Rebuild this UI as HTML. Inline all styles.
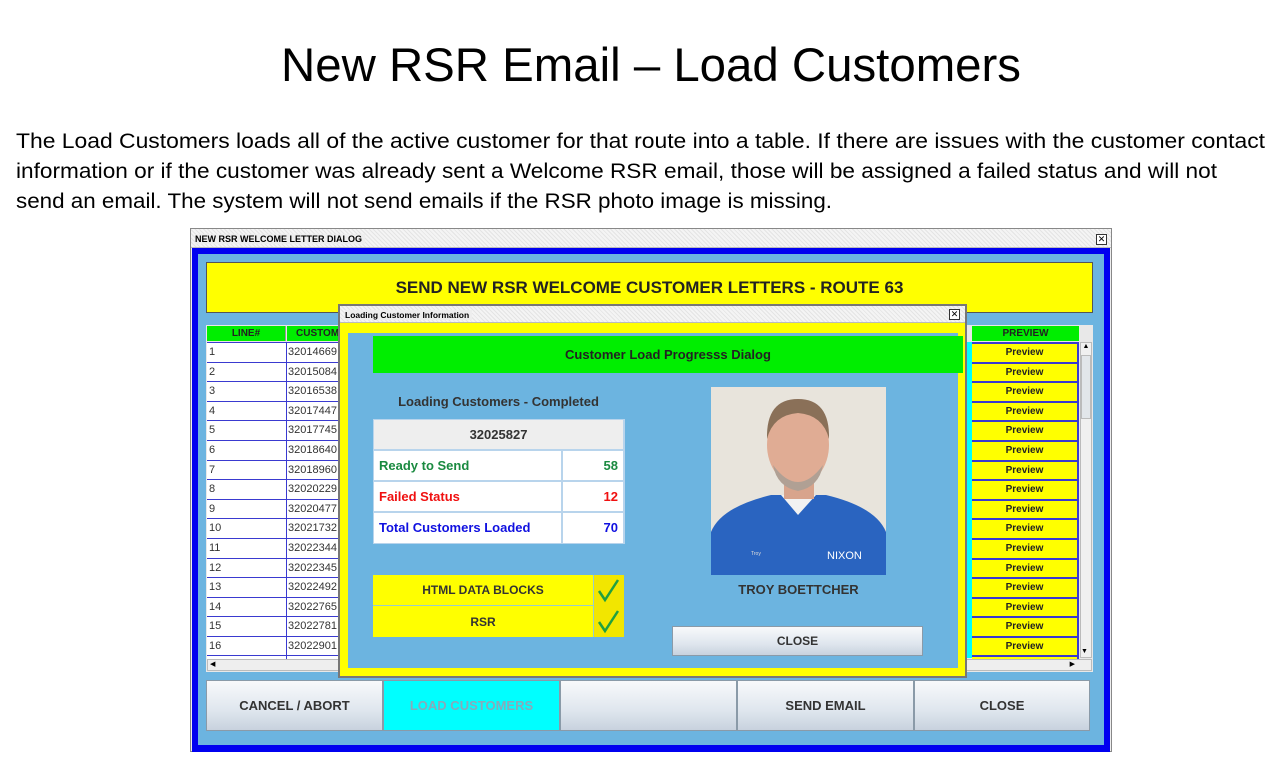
<!DOCTYPE html>
<html><head><meta charset="utf-8"><style>
*{margin:0;padding:0;box-sizing:border-box}
body{width:1272px;height:761px;background:#fff;position:relative;overflow:hidden;font-family:"Liberation Sans",Arial,sans-serif}
.a{position:absolute}
.b{font-weight:bold}
.c{display:flex;align-items:center;justify-content:center}
.cell{position:absolute;background:#fff;border-top:1px solid #3a3ad0;font-size:11px;color:#333;padding-left:2px;line-height:18px;height:20px}
.pv{position:absolute;left:972px;width:107px;height:20px;background:#ff0;border-top:2px solid #3a3ad0;border-right:2px solid #3a3ad0;font-size:10px;font-weight:bold;color:#222;text-align:center;line-height:17px}
.btn{position:absolute;top:680px;height:51px;border:1px solid #8a9aa8;background:linear-gradient(#f8f9fb,#dfe6ee 60%,#c8d2de);font-size:13px;font-weight:bold;color:#333;display:flex;align-items:center;justify-content:center}
.tb{position:absolute;background:repeating-linear-gradient(45deg,#e4e4e4 0 1px,#f4f4f4 1px 3px);border-bottom:1px solid #bbb}
.x{position:absolute;width:11px;height:11px;border:1px solid #333;font-size:9px;line-height:9px;text-align:center;background:#fff}
</style></head><body>
<svg class="a" style="left:0;top:0" width="1272" height="220">
<text x="281" y="81" font-size="47" font-family="Liberation Sans,sans-serif" textLength="740" lengthAdjust="spacingAndGlyphs" fill="#000">New RSR Email – Load Customers</text>
<g font-size="21" font-family="Liberation Sans,sans-serif" fill="#000">
<text x="16" y="148" textLength="1249" lengthAdjust="spacingAndGlyphs">The Load Customers loads all of the active customer for that route into a table.  If there are issues with the customer contact</text>
<text x="16" y="178" textLength="1201" lengthAdjust="spacingAndGlyphs">information or if the customer was already sent a Welcome RSR email, those will be assigned a failed status and will not</text>
<text x="16" y="208" textLength="816" lengthAdjust="spacingAndGlyphs">send an email.  The system will not send emails if the RSR photo image is missing.</text>
</g></svg>

<!-- main window -->
<div class="a" style="left:190px;top:228px;width:922px;height:524px;background:#eee;border:1px solid #888"></div>
<div class="tb" style="left:191px;top:229px;width:920px;height:19px"></div>
<div class="a b" style="left:195px;top:234px;font-size:9px;background:#eee;padding-right:3px">NEW RSR WELCOME LETTER DIALOG</div>
<div class="x" style="left:1096px;top:234px">✕</div>
<div class="a" style="left:192px;top:248px;width:918px;height:504px;background:#0000f0"></div>
<div class="a" style="left:198px;top:254px;width:906px;height:491px;background:#6cb4e0"></div>
<div class="a c b" style="left:206px;top:262px;width:887px;height:51px;background:#ff0;border:1px solid #555;font-size:17px;color:#222">SEND NEW RSR WELCOME CUSTOMER LETTERS - ROUTE 63</div>

<!-- left table -->
<div class="a" style="left:206px;top:325px;width:140px;height:347px;background:#e8e8e8"></div>
<div class="a c b" style="left:207px;top:326px;width:79px;height:15px;background:#00ee00;font-size:10px;color:#222;border-right:1px solid #999">LINE#</div>
<div class="a b" style="left:287px;top:326px;width:60px;height:15px;background:#00ee00;font-size:10px;color:#222;padding-left:9px;line-height:15px">CUSTOM</div>
<div class="cell" style="left:207px;top:342px;width:80px">1</div><div class="cell" style="left:286px;top:342px;width:61px">32014669</div>
<div class="cell" style="left:207px;top:362px;width:80px">2</div><div class="cell" style="left:286px;top:362px;width:61px">32015084</div>
<div class="cell" style="left:207px;top:381px;width:80px">3</div><div class="cell" style="left:286px;top:381px;width:61px">32016538</div>
<div class="cell" style="left:207px;top:401px;width:80px">4</div><div class="cell" style="left:286px;top:401px;width:61px">32017447</div>
<div class="cell" style="left:207px;top:420px;width:80px">5</div><div class="cell" style="left:286px;top:420px;width:61px">32017745</div>
<div class="cell" style="left:207px;top:440px;width:80px">6</div><div class="cell" style="left:286px;top:440px;width:61px">32018640</div>
<div class="cell" style="left:207px;top:460px;width:80px">7</div><div class="cell" style="left:286px;top:460px;width:61px">32018960</div>
<div class="cell" style="left:207px;top:479px;width:80px">8</div><div class="cell" style="left:286px;top:479px;width:61px">32020229</div>
<div class="cell" style="left:207px;top:499px;width:80px">9</div><div class="cell" style="left:286px;top:499px;width:61px">32020477</div>
<div class="cell" style="left:207px;top:518px;width:80px">10</div><div class="cell" style="left:286px;top:518px;width:61px">32021732</div>
<div class="cell" style="left:207px;top:538px;width:80px">11</div><div class="cell" style="left:286px;top:538px;width:61px">32022344</div>
<div class="cell" style="left:207px;top:558px;width:80px">12</div><div class="cell" style="left:286px;top:558px;width:61px">32022345</div>
<div class="cell" style="left:207px;top:577px;width:80px">13</div><div class="cell" style="left:286px;top:577px;width:61px">32022492</div>
<div class="cell" style="left:207px;top:597px;width:80px">14</div><div class="cell" style="left:286px;top:597px;width:61px">32022765</div>
<div class="cell" style="left:207px;top:616px;width:80px">15</div><div class="cell" style="left:286px;top:616px;width:61px">32022781</div>
<div class="cell" style="left:207px;top:636px;width:80px">16</div><div class="cell" style="left:286px;top:636px;width:61px">32022901</div>
<div class="cell" style="left:207px;top:655px;width:80px;height:4px"></div><div class="cell" style="left:286px;top:655px;width:61px;height:4px"></div>
<div class="a" style="left:286px;top:342px;width:1px;height:317px;background:#3a3ad0"></div>
<div class="a" style="left:207px;top:659px;width:140px;height:12px;background:#eee;border:1px solid #bbb;font-size:7px;line-height:10px;padding-left:2px">◀</div>

<!-- right preview column -->
<div class="a" style="left:966px;top:325px;width:127px;height:347px;background:#e8e8e8"></div>
<div class="a" style="left:966px;top:342px;width:6px;height:316px;background:#00ffff"></div>
<div class="a c b" style="left:972px;top:326px;width:107px;height:15px;background:#00ee00;font-size:10px;color:#222">PREVIEW</div>
<div class="pv" style="top:342px">Preview</div><div class="pv" style="top:362px">Preview</div><div class="pv" style="top:381px">Preview</div><div class="pv" style="top:401px">Preview</div><div class="pv" style="top:420px">Preview</div><div class="pv" style="top:440px">Preview</div><div class="pv" style="top:460px">Preview</div><div class="pv" style="top:479px">Preview</div><div class="pv" style="top:499px">Preview</div><div class="pv" style="top:518px">Preview</div><div class="pv" style="top:538px">Preview</div><div class="pv" style="top:558px">Preview</div><div class="pv" style="top:577px">Preview</div><div class="pv" style="top:597px">Preview</div><div class="pv" style="top:616px">Preview</div><div class="pv" style="top:636px">Preview</div>
<div class="pv" style="top:655px;height:4px"></div>
<div class="a" style="left:1080px;top:342px;width:12px;height:316px;background:#f0f0f0;border:1px solid #bbb;font-size:7px;text-align:center">▲</div>
<div class="a" style="left:1081px;top:355px;width:10px;height:64px;background:#e2e6ea;border:1px solid #bbb"></div>
<div class="a" style="left:1081px;top:648px;font-size:7px">▼</div>
<div class="a" style="left:966px;top:659px;width:126px;height:12px;background:#eee;border:1px solid #bbb;font-size:7px;line-height:10px;text-align:right;padding-right:16px">▶</div>

<!-- buttons -->
<div class="btn" style="left:206px;width:177px">CANCEL / ABORT</div>
<div class="btn" style="left:383px;width:177px;background:#00ffff;color:#88aabb">LOAD CUSTOMERS</div>
<div class="btn" style="left:560px;width:177px"></div>
<div class="btn" style="left:737px;width:177px">SEND EMAIL</div>
<div class="btn" style="left:914px;width:176px">CLOSE</div>

<!-- dialog -->
<div class="a" style="left:338px;top:304px;width:629px;height:374px;background:#ff0;border:2px solid #777"></div>
<div class="tb" style="left:340px;top:306px;width:625px;height:17px"></div>
<div class="a b" style="left:345px;top:310px;font-size:8.5px;background:#eee;padding-right:3px">Loading Customer Information</div>
<div class="x" style="left:949px;top:309px">✕</div>
<div class="a" style="left:348px;top:333px;width:610px;height:335px;background:#6cb4e0"></div>
<div class="a c b" style="left:373px;top:336px;width:590px;height:37px;background:#00ee00;font-size:13px;color:#222">Customer Load Progresss Dialog</div>
<div class="a b" style="left:373px;top:394px;width:251px;text-align:center;font-size:13px;color:#333">Loading Customers - Completed</div>
<div class="a" style="left:373px;top:419px;width:252px;height:125px;background:#b8d4ec"></div>
<div class="a c b" style="left:374px;top:420px;width:249px;height:29px;background:#eee;font-size:13px;color:#333">32025827</div>
<div class="a b" style="left:374px;top:451px;width:187px;height:29px;background:#fff;font-size:13px;color:#1a8a40;line-height:29px;padding-left:5px">Ready to Send</div>
<div class="a b" style="left:563px;top:451px;width:60px;height:29px;background:#fff;font-size:13px;color:#1a8a40;line-height:29px;text-align:right;padding-right:5px">58</div>
<div class="a b" style="left:374px;top:482px;width:187px;height:29px;background:#fff;font-size:13px;color:#f01010;line-height:29px;padding-left:5px">Failed Status</div>
<div class="a b" style="left:563px;top:482px;width:60px;height:29px;background:#fff;font-size:13px;color:#f01010;line-height:29px;text-align:right;padding-right:5px">12</div>
<div class="a b" style="left:374px;top:513px;width:187px;height:30px;background:#fff;font-size:13px;color:#1010e0;line-height:30px;padding-left:5px">Total Customers Loaded</div>
<div class="a b" style="left:563px;top:513px;width:60px;height:30px;background:#fff;font-size:13px;color:#1010e0;line-height:30px;text-align:right;padding-right:5px">70</div>

<div class="a c b" style="left:373px;top:575px;width:220px;height:31px;background:#ff0;font-size:12px;color:#333;border-bottom:1px solid #9cc">HTML DATA BLOCKS</div>
<div class="a c b" style="left:373px;top:606px;width:220px;height:31px;background:#ff0;font-size:12px;color:#333">RSR</div>
<div class="a" style="left:593px;top:575px;width:31px;height:62px;background:#f2e600;border-left:1px solid #9cc"></div>
<svg class="a" style="left:593px;top:575px" width="31" height="62"><path d="M6 16 L12 25 L25 5" stroke="#20a040" stroke-width="2.5" fill="none"/><path d="M6 47 L12 56 L25 36" stroke="#20a040" stroke-width="2.5" fill="none"/></svg>

<!-- photo -->
<svg class="a" style="left:711px;top:387px" width="175" height="188">
<rect width="175" height="188" fill="#e8e4dc"/>
<path d="M0 188 L0 145 Q10 120 60 108 L115 108 Q165 120 175 145 L175 188Z" fill="#2a64c0"/>
<path d="M70 108 L87 128 L105 108Z" fill="#f2f2f2"/>
<rect x="73" y="88" width="30" height="24" fill="#d8a48c"/>
<ellipse cx="87" cy="58" rx="31" ry="40" fill="#e0ac94"/>
<path d="M56 52 Q55 12 87 12 Q119 12 118 52 Q112 28 87 26 Q62 28 56 52Z" fill="#8a7058"/>
<path d="M62 78 Q87 112 112 78 Q108 100 87 104 Q66 100 62 78Z" fill="#b0a094"/>
<text x="116" y="172" font-size="11" fill="#fff" font-family="Liberation Sans,sans-serif">NIXON</text>
<text x="40" y="168" font-size="5" fill="#ddd" font-family="Liberation Sans,sans-serif">Troy</text>
</svg>
<div class="a b" style="left:711px;top:582px;width:175px;text-align:center;font-size:13px;color:#333">TROY BOETTCHER</div>
<div class="a c b" style="left:672px;top:626px;width:251px;height:30px;border:1px solid #8a9aa8;background:linear-gradient(#f8f9fb,#dfe6ee 60%,#c8d2de);font-size:12px;color:#333">CLOSE</div>
</body></html>
